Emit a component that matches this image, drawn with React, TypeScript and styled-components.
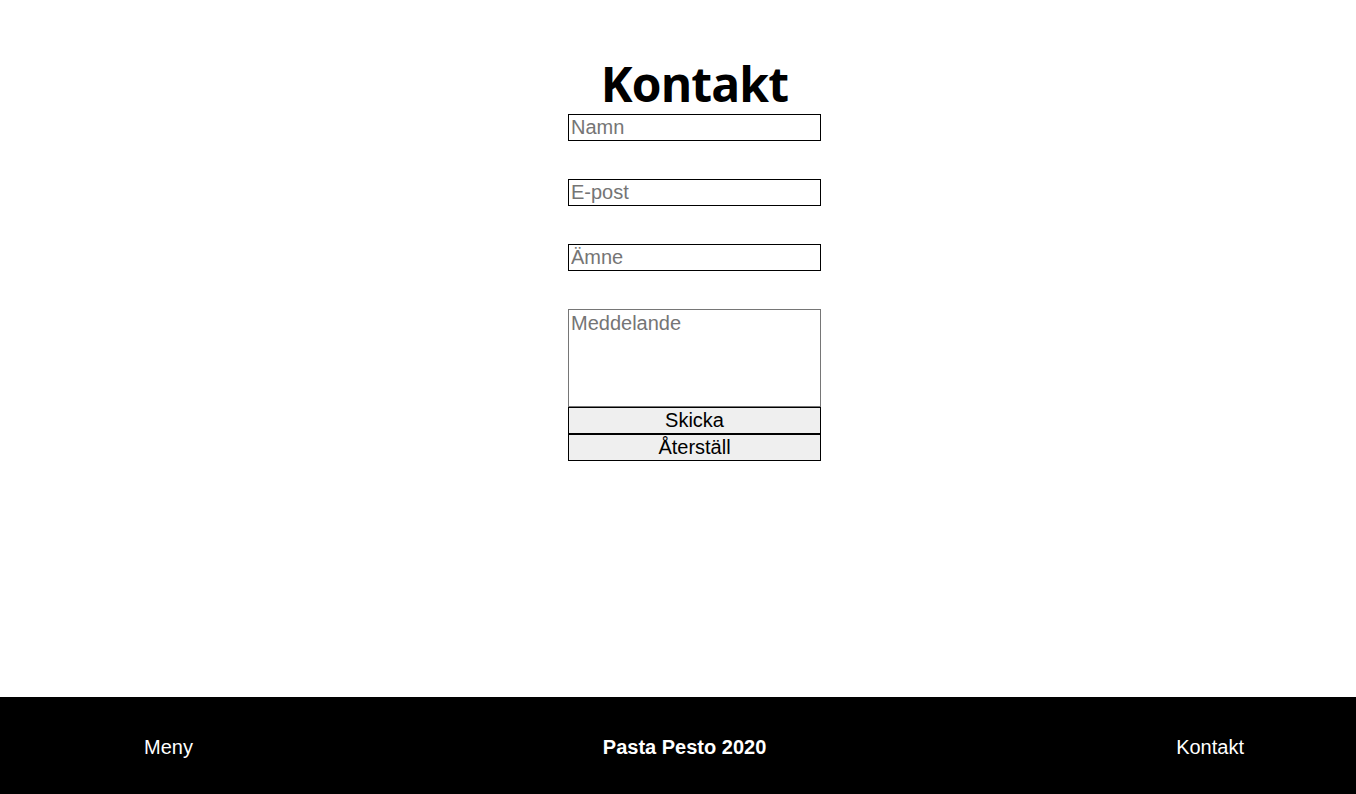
import React from "react";
import styled, { createGlobalStyle } from "styled-components";

const Global = createGlobalStyle`
  html, body { margin: 0; padding: 0; background: #fff; }
  body { font-family: "Liberation Sans", Arial, sans-serif; }
  * { box-sizing: border-box; }
`;

const Page = styled.div`
  min-height: 100vh;
  display: flex;
  flex-direction: column;
`;

const Main = styled.main`
  flex: 1;
  display: flex;
  flex-direction: column;
  align-items: center;
  padding: 54px 0 0 33px;
`;

const Title = styled.h1`
  margin: 0;
  font-family: "Open Sans", "Noto Sans", sans-serif;
  font-weight: 700;
  font-size: 48px;
  line-height: 60px;
  color: #000;
  letter-spacing: -0.9px;
`;

const Form = styled.form`
  width: 253px;
  display: flex;
  flex-direction: column;
`;

const Field = styled.input`
  width: 253px;
  height: 27px;
  margin: 0 0 38px;
  padding: 1px 2px;
  border: 1px solid #000;
  font-family: "Liberation Sans", Arial, sans-serif;
  font-size: 20px;
  color: #000;
  background: #fff;
  outline: none;
  &::placeholder { color: #757575; }
`;

const Message = styled.textarea`
  width: 253px;
  height: 98px;
  margin: 0;
  padding: 2px 2px;
  border: 1px solid #767676;
  font-family: "Liberation Sans", Arial, sans-serif;
  font-size: 20px;
  line-height: 23px;
  resize: none;
  outline: none;
  display: block;
  &::placeholder { color: #757575; }
`;

const Button = styled.button`
  width: 253px;
  height: 27px;
  margin: 0;
  padding: 0;
  border: 1px solid #000;
  background: #efefef;
  color: #000;
  font-family: "Liberation Sans", Arial, sans-serif;
  font-size: 20px;
  line-height: 23px;
  cursor: pointer;
`;

const Footer = styled.footer`
  height: 97px;
  background: #000;
  display: flex;
  align-items: center;
  justify-content: space-between;
  padding: 0 112px 0 144px;
`;

const FootLink = styled.a<{ $bold?: boolean }>`
  color: #fff;
  text-decoration: none;
  font-family: "Liberation Sans", Arial, sans-serif;
  font-size: 20px;
  font-weight: ${(p) => (p.$bold ? 700 : 400)};
  line-height: 23px;
  padding-top: 4px;
`;

export default function App() {
  return (
    <Page>
      <Global />
      <Main>
        <Title>Kontakt</Title>
        <Form onSubmit={(e) => e.preventDefault()}>
          <Field type="text" placeholder="Namn" />
          <Field type="email" placeholder="E-post" />
          <Field type="text" placeholder="Ämne" />
          <Message placeholder="Meddelande" />
          <Button type="submit">Skicka</Button>
          <Button type="reset">Återställ</Button>
        </Form>
      </Main>
      <Footer>
        <FootLink href="#">Meny</FootLink>
        <FootLink $bold>Pasta Pesto 2020</FootLink>
        <FootLink href="#">Kontakt</FootLink>
      </Footer>
    </Page>
  );
}
